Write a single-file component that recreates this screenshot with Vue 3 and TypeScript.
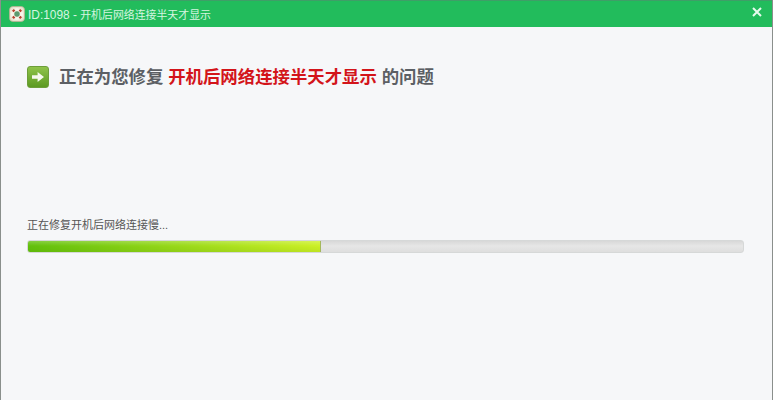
<template>
  <div class="win">
    <header class="titlebar">
      <div class="title-left">
        <svg class="logo" width="18" height="18" viewBox="0 0 18 18">
          <rect x="1.5" y="1.5" width="15" height="15" rx="3.5" fill="#e9e4d2" stroke="#b9b193" stroke-width="0.8" />
          <circle cx="9" cy="9" r="4.6" fill="none" stroke="#f8f4ea" stroke-width="3" />
          <path d="M4.9 4.9 L6.4 6.4 M13.1 4.9 L11.6 6.4 M4.9 13.1 L6.4 11.6 M13.1 13.1 L11.6 11.6" stroke="#b8402c" stroke-width="2.6" />
          <circle cx="9" cy="9" r="2.7" fill="#5c9a6e" />
        </svg>
        <span class="title-text"><span class="title-id">ID:1098 - </span>开机后网络连接半天才显示</span>
      </div>
      <svg class="close" width="10" height="10" viewBox="0 0 10 10">
        <path d="M1 1 L9 9 M9 1 L1 9" stroke="#e8fbee" stroke-width="2" />
      </svg>
    </header>

    <main class="body">
      <div class="heading">
        <span class="arrow-box">
          <svg width="14" height="12" viewBox="0 0 14 12">
            <path d="M1 4.2 H6.6 V1 L13 6 L6.6 11 V7.8 H1 Z" fill="#f6f8ee" />
          </svg>
        </span>
        <h1 class="heading-text">正在为您修复 <em>开机后网络连接半天才显示</em> 的问题</h1>
      </div>

      <div class="progress-area">
        <p class="status">正在修复开机后网络连接慢...</p>
        <div class="track">
          <div class="fill" :style="{ width: progress + '%' }"></div>
        </div>
      </div>
    </main>
  </div>
</template>

<script setup lang="ts">
import { ref } from 'vue';

const progress = ref(41);
</script>

<style scoped>
.win {
  width: 773px;
  height: 400px;
  display: flex;
  flex-direction: column;
  box-sizing: border-box;
  border-left: 1px solid #8a8f8c;
  border-right: 1px solid #8a8f8c;
  background: #f6f7f9;
  overflow: hidden;
  font-family: "Liberation Sans", "Noto Sans CJK SC", sans-serif;
}

.titlebar {
  height: 27px;
  flex: none;
  margin: 0 -1px;
  display: flex;
  align-items: center;
  justify-content: space-between;
  padding: 0 11px 0 8px;
  background: #22bc5c;
  border-top: 1px solid #3f9f68;
  box-sizing: border-box;
}

.title-left {
  display: flex;
  align-items: center;
  gap: 2px;
}

.title-text {
  color: #d6f5e0;
  font-size: 10.9px;
}

.title-id {
  font-size: 11.9px;
}

.close {
  margin-bottom: 4px;
}

.body {
  flex: 1;
  padding: 0 28px 0 26px;
}

.heading {
  display: flex;
  align-items: center;
  gap: 10px;
  margin-top: 38px;
}

.arrow-box {
  width: 22px;
  height: 22px;
  border-radius: 3px;
  display: flex;
  align-items: center;
  justify-content: center;
  background: linear-gradient(#8fc34a, #5c9a22);
  border: 1px solid #6d9e3a;
  box-sizing: border-box;
}

.heading-text {
  margin: 0;
  font-size: 17.4px;
  font-weight: 700;
  color: #5c5f64;
  line-height: 24px;
}

.heading-text em {
  font-style: normal;
  color: #d3141a;
}

.progress-area {
  margin-top: 128px;
}

.status {
  margin: 0 0 7px;
  font-size: 11px;
  line-height: 16px;
  color: #555;
}

.track {
  height: 13px;
  border-radius: 3px;
  background: linear-gradient(#d8d8d8, #e6e6e6 45%, #dedede);
  border: 1px solid #d6d8d8;
  box-sizing: border-box;
  overflow: hidden;
}

.fill {
  height: 100%;
  background:
    linear-gradient(rgba(255, 255, 255, 0.22), rgba(255, 255, 255, 0) 45%, rgba(60, 110, 0, 0.1)),
    linear-gradient(90deg, #62c00c, #ccf026);
  border-right: 1px solid #a4b85c;
  box-sizing: border-box;
}
</style>

<style>
html,
body {
  margin: 0;
  padding: 0;
}
</style>
